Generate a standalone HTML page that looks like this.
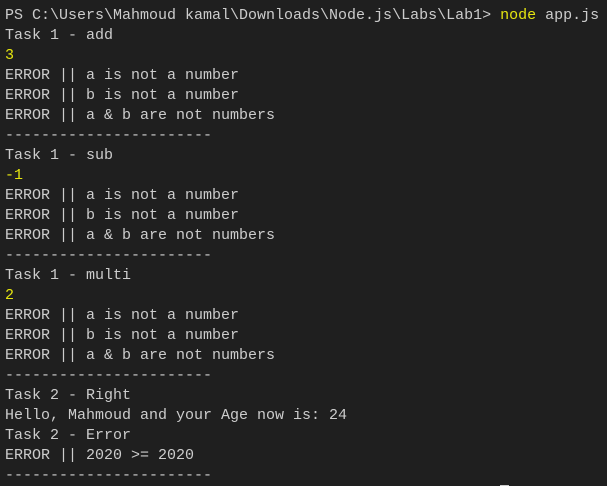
<!DOCTYPE html>
<html><head><style>
html,body{margin:0;padding:0;background:#1f1f1f;width:607px;height:486px;overflow:hidden}
pre{margin:0;position:absolute;left:5px;top:6px;font-family:"Liberation Mono",monospace;font-size:15px;line-height:20px;color:#cccccc;white-space:pre}
.y{color:#e5e510}
#c{position:absolute;left:500px;top:485px;width:9px;height:1px;background:#cccccc}
</style></head><body>
<pre>PS C:\Users\Mahmoud kamal\Downloads\Node.js\Labs\Lab1> <span class="y">node</span> app.js
Task 1 - add
<span class="y">3</span>
ERROR || a is not a number
ERROR || b is not a number
ERROR || a &amp; b are not numbers
-----------------------
Task 1 - sub
<span class="y">-1</span>
ERROR || a is not a number
ERROR || b is not a number
ERROR || a &amp; b are not numbers
-----------------------
Task 1 - multi
<span class="y">2</span>
ERROR || a is not a number
ERROR || b is not a number
ERROR || a &amp; b are not numbers
-----------------------
Task 2 - Right
Hello, Mahmoud and your Age now is: 24
Task 2 - Error
ERROR || 2020 >= 2020
-----------------------</pre>
<div id="c"></div>
</body></html>
